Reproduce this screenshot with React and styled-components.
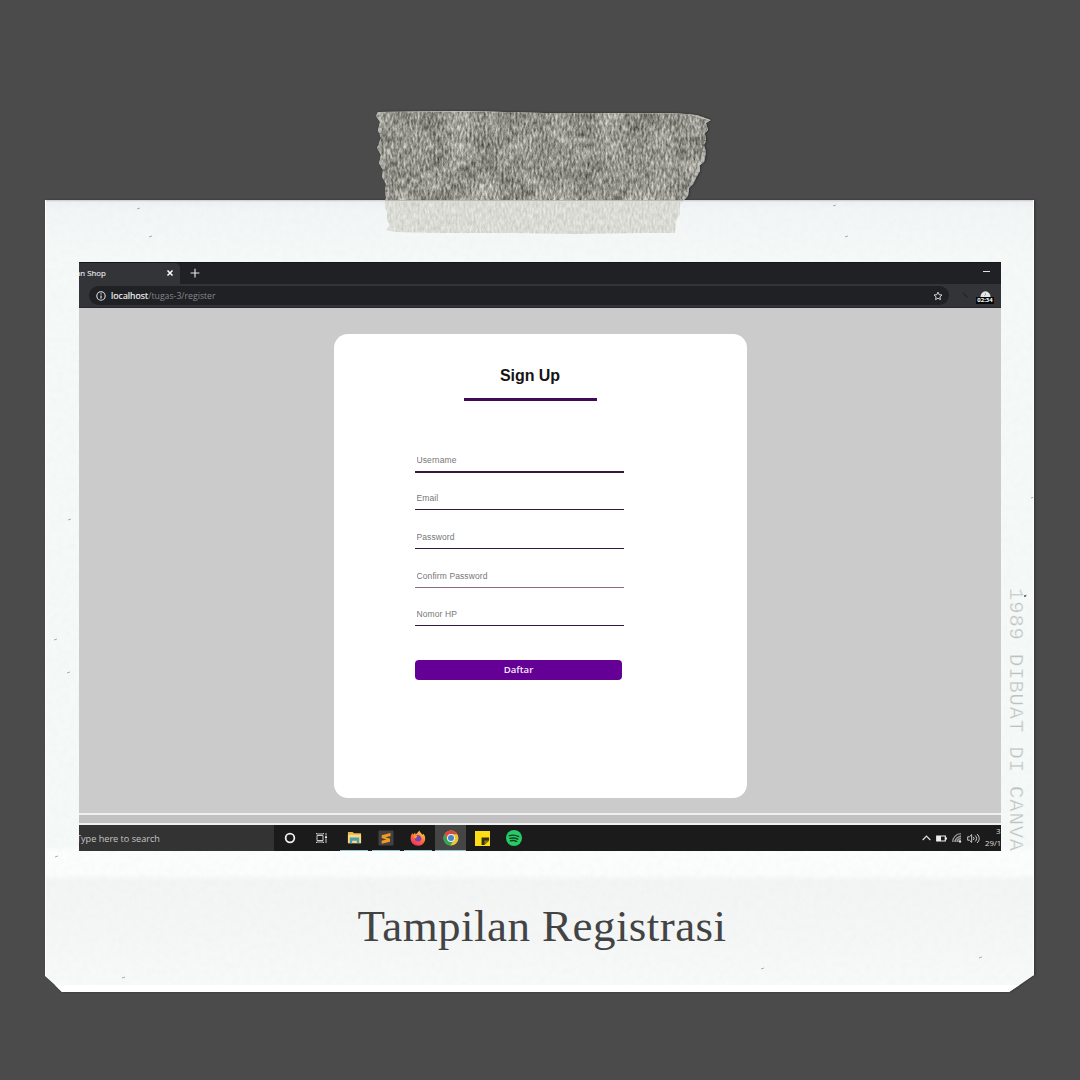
import React from "react";
import styled, { createGlobalStyle } from "styled-components";

const Global = createGlobalStyle`
  * { box-sizing: border-box; }
  body { margin: 0; background: #4b4b4b; }
`;

const Canvas = styled.main`
  width: 1080px;
  height: 1080px;
  padding: 200px 46px 0 45px;
  background: #4b4b4b;
  overflow: hidden;
  font-family: "Open Sans", sans-serif;
`;

const Photo = styled.section`
  position: relative;
  width: 989px;
  height: 792px;
  filter: drop-shadow(1px 0 1px rgba(30, 30, 30, 0.55));
`;

const Paper = styled.div`
  display: grid;
  grid-template-columns: 922px 33px;
  grid-template-rows: 589px 141px;
  height: 792px;
  padding: 62px 0 0 34px;
  background: linear-gradient(180deg, #c9c6d0 0, #eef0f2 2px, #f1f5f4 8px, transparent 9px),
    linear-gradient(180deg, transparent 785px, #ffffff 785px),
    linear-gradient(180deg, #f2f5f5 0, #f5f9f8 60px, #f5f9f8 645px, #fcfdfd 652px, #fbfcfc 674px, #f3f5f5 681px, #f4f7f6 740px, #f7faf9 785px);
  clip-path: polygon(0 0, 989px 0, 989px 775px, 976px 784px, 964px 792px, 17px 792px, 10px 785px, 0 776px);
`;

const Texture = styled.svg`
  position: absolute;
  inset: 0;
  pointer-events: none;
`;

const Screen = styled.div`
  position: relative;
  display: flex;
  flex-direction: column;
  height: 589px;
  overflow: hidden;
  background: #cbcbcb;
`;

const TabBar = styled.div`
  display: flex;
  height: 22px;
  background: #1f2125;
  border-top: 1px solid #14161a;
  color: #e6e6e6;
`;

const Tab = styled.div`
  display: flex;
  align-items: center;
  justify-content: space-between;
  width: 101px;
  padding: 0 6px 2px 0;
  background: #323438;
  border-radius: 0 5px 0 0;
  font-size: 7.8px;
  white-space: nowrap;
  -webkit-text-stroke: 0.15px #e6e6e6;
`;

const TabTitle = styled.span`
  margin-left: -3px;
`;

const TabTools = styled.div`
  display: flex;
  flex: 1;
  align-items: center;
  justify-content: space-between;
  padding: 0 11px 2px 10px;
`;

const Minimize = styled.span`
  width: 7px;
  height: 1px;
  margin-bottom: 3px;
  background: #e0e0e0;
`;

const AddressBar = styled.div`
  display: flex;
  align-items: center;
  height: 24px;
  padding: 0 7px 0 10px;
  background: #323438;
  border-bottom: 1px solid #25272a;
`;

const Omnibox = styled.div`
  display: flex;
  align-items: center;
  width: 860px;
  height: 19px;
  padding: 0 6px 0 7px;
  border-radius: 10px;
  background: #1f2125;
  color: #84878b;
  font-size: 8.7px;
  line-height: 18px;
`;

const Url = styled.span`
  flex: 1;
  margin-left: 5px;
`;

const Host = styled.span`
  color: #f0f0f0;
  letter-spacing: 0.1px;
  -webkit-text-stroke: 0.2px #f0f0f0;
`;

const Extensions = styled.div`
  display: flex;
  flex: 1;
  align-items: center;
  justify-content: flex-end;
  gap: 6px;
`;

const Timer = styled.div`
  display: flex;
  flex-direction: column;
  align-items: center;
  width: 18px;
  margin-top: 3px;
`;

const TimerLabel = styled.span`
  width: 18px;
  height: 7px;
  background: #08090b;
  color: #fff;
  font-size: 6px;
  font-weight: 700;
  line-height: 7px;
  text-align: center;
`;

const Page = styled.div`
  display: flex;
  flex-direction: column;
  align-items: center;
  height: 505px;
  padding-top: 26px;
  background: #cbcbcb;
`;

const Card = styled.form`
  display: flex;
  flex-direction: column;
  width: 413px;
  height: 464px;
  padding: 32px 0 0 81.5px;
  border-radius: 14px;
  background: #fff;
  font-family: "Liberation Sans", Arial, sans-serif;
`;

const Title = styled.h1`
  width: 133px;
  height: 35px;
  margin: 0 0 41.7px 48.5px;
  border-bottom: 3px solid #400a58;
  color: #151515;
  font-size: 16px;
  font-weight: 700;
  letter-spacing: -0.05px;
  line-height: 20px;
  text-align: center;
`;

const Field = styled.input`
  display: block;
  width: 209px;
  height: 30px;
  margin: 0 0 8.65px;
  padding: 5px 0 1px 1.5px;
  border: 0;
  background: linear-gradient(
    transparent 28px,
    ${(p) => (p.$soft ? "#8a6c88" : "#35183d")} 28px,
    ${(p) => (p.$soft ? "#8a6c88" : "#35183d")} 29.5px,
    transparent 29.5px
  );
  outline: 0;
  font-family: inherit;
  font-size: 8.5px;
  letter-spacing: 0.1px;
  &::placeholder { color: #777; opacity: 1; }
`;

const Submit = styled.button`
  width: 207px;
  height: 20px;
  margin-top: 24px;
  padding: 0;
  border: 0;
  border-radius: 4px;
  background: #640095;
  color: #f5e9fa;
  font: 600 9.6px/20px "Open Sans", sans-serif;
`;

const WindowEdge = styled.div`
  height: 12px;
  flex: none;
  border-top: 2px solid #efefef;
  border-bottom: 2px solid #f0f0f0;
  background: #c1c1c1;
`;

const Taskbar = styled.div`
  display: flex;
  height: 26px;
  flex: none;
  background: #1b1b1b;
`;

const Search = styled.div`
  width: 195px;
  background: #333;
  color: #c4c4c4;
  font-size: 9.15px;
  line-height: 27px;
  white-space: nowrap;
`;

const SearchText = styled.span`
  margin-left: -3px;
`;

const AppSlot = styled.div`
  display: flex;
  align-items: center;
  justify-content: center;
  width: ${(p) => (p.$active ? "31px" : p.$open ? "28px" : "32px")};
  margin-right: ${(p) => (p.$open && !p.$active ? "2px" : "0")};
  margin-left: ${(p) => (p.$active ? "1px" : p.$open ? "2px" : "0")};
  background: ${(p) => (p.$active ? "#454545" : "transparent")};
  border-bottom: ${(p) => (p.$open ? "1px solid #94c7d4" : "0")};
`;

const Tray = styled.div`
  display: flex;
  align-items: center;
  gap: 5px;
  margin-left: auto;
`;

const Clock = styled.div`
  width: 16px;
  height: 26px;
  color: #dedede;
  font-size: 7.8px;
  line-height: 12px;
  overflow: hidden;
  white-space: nowrap;
`;

const Hour = styled.div`
  height: 12px;
  padding-left: 11px;
`;

const SideNote = styled.div`
  width: 26px;
  height: 700px;
  margin-left: 1px;
  padding-top: 326px;
  color: #bdc1c0;
  font: 20.5px/26px "Liberation Mono", monospace;
  letter-spacing: 0.9px;
  white-space: nowrap;
  writing-mode: vertical-rl;
  -webkit-text-stroke: 0.4px #f5f9f8;
`;

const Caption = styled.h2`
  grid-column: 1;
  grid-row: 2;
  width: 926px;
  margin: 0;
  padding-top: 49px;
  color: #424242;
  font: 400 45px/52px "Liberation Serif", serif;
  letter-spacing: 0.45px;
  text-align: center;
`;

const Tape = styled.svg`
  position: absolute;
  left: 329px;
  top: -92px;
`;

const Icon = ({ s = 16, w = s, box = "0 0 16 16", children }) => (
  <svg width={w} height={s} viewBox={box} fill="none">{children}</svg>
);

const fields = ["Username", "Email", "Password", "Confirm Password", "Nomor HP"];

function Browser() {
  return (
    <>
      <TabBar>
        <Tab>
          <TabTitle>an Shop</TabTitle>
          <Icon s={8}><path d="M3 3l10 10M13 3L3 13" stroke="#fff" strokeWidth="3" /></Icon>
        </Tab>
        <TabTools>
          <Icon s={10}><path d="M8 1v14M1 8h14" stroke="#e8e8e8" strokeWidth="1.8" /></Icon>
          <Minimize />
        </TabTools>
      </TabBar>
      <AddressBar>
        <Omnibox>
          <Icon s={10}>
            <circle cx="8" cy="8" r="6.7" stroke="#e5e5e5" strokeWidth="1.7" />
            <path d="M8 7v5M8 3.7v2" stroke="#e5e5e5" strokeWidth="1.9" />
          </Icon>
          <Url><Host>localhost</Host>/tugas-3/register</Url>
          <Icon s={10}>
            <path d="M8 1.8l1.9 4.1 4.5.5-3.4 3 .9 4.4L8 11.5l-3.9 2.3.9-4.4-3.4-3 4.5-.5z" stroke="#d4d4d4" strokeWidth="1.6" />
          </Icon>
        </Omnibox>
        <Extensions>
          <Icon s={8}><path d="M2 2l9 9" stroke="#222428" strokeWidth="2.5" /></Icon>
          <Timer>
            <Icon w={11} s={7} box="0 0 11 7">
              <path d="M.5 7a5 5.8 0 0 1 10 0z" fill="#e6e6e6" />
              <path d="M5.5 3v2l-1.5 1" stroke="#aaa" />
            </Icon>
            <TimerLabel>02:34</TimerLabel>
          </Timer>
        </Extensions>
      </AddressBar>
    </>
  );
}

function Signup() {
  return (
    <Page>
      <Card>
        <Title>Sign Up</Title>
        {fields.map((name) => (
          <Field key={name} placeholder={name} aria-label={name} $soft={name === "Confirm Password"} />
        ))}
        <Submit type="button">Daftar</Submit>
      </Card>
    </Page>
  );
}

function Apps() {
  return (
    <>
      <AppSlot><Icon s={12}><circle cx="8" cy="8" r="5.8" stroke="#eee" strokeWidth="2.4" /></Icon></AppSlot>
      <AppSlot>
        <Icon w={12} s={12} box="0 0 12 12">
          <path d="M1 3.5h6v5H1zM.5 1v1h7V1M.5 11v-1h7v1M10 1v2.5M10 7v4" stroke="#ccc" />
          <path d="M9 4.2h2v2H9z" fill="#eee" />
        </Icon>
      </AppSlot>
      <AppSlot $open>
        <Icon s={15}>
          <path d="M1 2h5l1.5 1.5H15V14H1z" fill="#e9b84c" />
          <path d="M1 5h14v9H1z" fill="#fada7f" />
          <path d="M3 8h10v6h-2.5v-2.5h-5V14H3z" fill="#4d9cb8" />
        </Icon>
      </AppSlot>
      <AppSlot $open>
        <Icon s={16}>
          <rect x=".5" y=".5" width="15" height="15" rx="1" fill="#444240" />
          <path d="M12.5 3v3L7.5 7.3l4.5 1.5v3L3.7 13.8v-3L8.5 9.4 3.7 8V5.2z" fill="#f39a20" />
        </Icon>
      </AppSlot>
      <AppSlot $open>
        <Icon s={16}>
          <defs>
            <linearGradient id="fox" x1="12" y1="1" x2="4" y2="15" gradientUnits="userSpaceOnUse">
              <stop stopColor="#ffda45" /><stop offset=".5" stopColor="#ff7538" /><stop offset="1" stopColor="#ec2d68" />
            </linearGradient>
          </defs>
          <path d="M2.3 3.2l1.3 1.2L5 2.5l.5 1.7C7 3.6 8 2.1 9.3.4 10 3 12 3.1 12.4 5l.7-1.2C15 5.4 15.6 8 15 10.5 14 14 11.3 15.7 8 15.7c-4.2 0-7.2-3-7.4-7 0-2.1.5-3.8 1.7-5.5z" fill="url(#fox)" />
          <path d="M5 6.5c1.5-.4 1.9-1 3.2-1.4 2 .5 3.3 1.9 3.1 3.8-.3 1.8-1.5 2.7-3.3 2.7-2 0-3.2-1.3-3.3-3l2-.2z" fill="#7944b7" />
          <path d="M3.7 5.5l3.8.7-1.4 1.5-1.7.6z" fill="#ff9f35" />
        </Icon>
      </AppSlot>
      <AppSlot $active $open>
        <Icon s={16}>
          <circle cx="8" cy="8" r="7.5" fill="#edc52e" />
          <path d="M1.5 4.2A7.5 7.5 0 0 1 14.5 4.3H8a3.7 3.7 0 0 0-3.2 5.6z" fill="#db493c" />
          <path d="M1.5 4.2A7.5 7.5 0 0 0 7.2 15.5l4-5.7A3.7 3.7 0 0 1 4.8 9.9z" fill="#30a457" />
          <circle cx="8" cy="8" r="4" fill="#eee" /><circle cx="8" cy="8" r="3" fill="#4b83d1" />
        </Icon>
      </AppSlot>
      <AppSlot>
        <Icon s={15}><path d="M0 0h16v16H0z" fill="#ffdd16" /><path d="M7 7h8v3l-5 5H7z" fill="#34310f" /><path d="M10 15v-5h5z" fill="#8d7b0c" /></Icon>
      </AppSlot>
      <AppSlot>
        <Icon s={16}>
          <circle cx="8" cy="8" r="8" fill="#25cb65" />
          <path d="M3.3 5.7c3.3-1 6.5-.7 9.4.9M3.9 8.4c2.8-.8 5.5-.5 7.9.8M4.5 10.8c2.3-.6 4.4-.3 6.2.7" stroke="#123d23" strokeWidth="1.4" strokeLinecap="round" />
        </Icon>
      </AppSlot>
      <Tray>
        <Icon w={9} s={6} box="0 0 9 6"><path d="M.7 5l3.8-4 3.8 4" stroke="#ddd" strokeWidth="1.2" /></Icon>
        <Icon w={11} s={7} box="0 0 11 7"><path d="M.7 1h8.6v5H.7zM10.4 2.5v2" stroke="#eee" strokeWidth="1.2" /><path d="M1 1h4v5H1z" fill="#eee" /></Icon>
        <Icon w={10} s={10} box="0 0 10 10">
          <path d="M1 9L9 1v8z" fill="#555" />
          <path d="M.7 9A8 8 0 0 1 9 .8M3 9a6 6 0 0 1 6-5.8M5.2 9A4 4 0 0 1 9 5.5" stroke="#a5a5a5" strokeWidth="1.1" />
          <circle cx="8" cy="8.5" r="1.2" fill="#ddd" />
        </Icon>
        <Icon w={13} s={11} box="0 0 13 11">
          <path d="M.7 3.8h1.7l2.3-2.2v7.8L2.4 7.2H.7zM6.4 4a2.2 2.2 0 0 1 0 3M8.2 2.5c1.8 1.6 1.8 4.4 0 6M10 1c2.9 2.5 2.9 6.5 0 9" stroke="#ccc" />
        </Icon>
        <Clock><Hour>3</Hour><div>29/1</div></Clock>
      </Tray>
    </>
  );
}

function TornTape() {
  return (
    <Tape width="342" height="130" viewBox="0 0 342 130">
      <defs>
        <filter id="fibres" x="0" y="0" width="100%" height="100%" colorInterpolationFilters="sRGB">
          <feTurbulence type="fractalNoise" baseFrequency=".5 .17" numOctaves="3" seed="8" result="n" />
          <feColorMatrix in="n" values="1.35 0 0 0 -.1  1.35 0 0 0 -.1  1.35 0 0 0 -.13  0 0 0 0 1" />
        </filter>
        <filter id="clouds" x="0" y="0" width="100%" height="100%" colorInterpolationFilters="sRGB">
          <feTurbulence type="fractalNoise" baseFrequency=".04" numOctaves="3" seed="4" />
          <feColorMatrix values="1 0 0 0 .1  1 0 0 0 .1  1 0 0 0 .07  0 0 0 0 .3" />
        </filter>
        <clipPath id="torn">
          <path d="M4 4L90 3 170 5 240 5 300 5 323 7 337 12 332 15 334 22 331 25 332 33 330 37 332 44 330 54 326 57 326 63 323 68 319 76 315 80 314 88 310 92 306 97 306 106 302 113 301 125 265 125 200 126 140 125 60 125 22 124 12 122 16 117 13 112 13 105 10 96 12 90 11 82 12 76 8 69 9 62 5 55 7 47 3 40 7 30 4 22 6 14 2 8z" />
        </clipPath>
      </defs>
      <g clipPath="url(#torn)">
        <rect width="342" height="92" fill="#93938d" />
        <rect width="342" height="92" filter="url(#fibres)" opacity=".75" />
        <rect width="342" height="92" filter="url(#clouds)" />
        <rect y="92" width="342" height="38" fill="#e8e8e3" />
        <rect y="92" width="342" height="38" filter="url(#fibres)" opacity=".15" />
        <path d="M0 92.5h342" stroke="#b9b9b5" />
        <path d="M4 4l1 20-2 16 5 17-1 12 5 9-1 14M337 12l-5 25-3 18-11 22-8 15" stroke="#c7c8c5" strokeWidth="5" strokeDasharray="3 2 5 1" fill="none" opacity=".6" />
        <path d="M0 3.7l90-.4 150 1.5h70l25 7" stroke="#c4c5bc" fill="none" />
      </g>
    </Tape>
  );
}

const specks = [[92, 9], [104, 37], [23, 320], [9, 440], [22, 473], [10, 657], [788, 6], [800, 37], [979, 396], [716, 769], [77, 778], [934, 758], [986, 298]];

export default function App() {
  return (
    <Canvas>
      <Global />
      <Photo>
        <Paper>
          <Texture width="989" height="792">
            <defs>
              <filter id="paper" x="0" y="0" width="100%" height="100%" colorInterpolationFilters="sRGB">
                <feTurbulence type="fractalNoise" baseFrequency=".16" numOctaves="3" seed="2" />
                <feColorMatrix values="0 0 0 0 .7  0 0 0 0 .74  0 0 0 0 .72  .35 0 0 0 -.13" />
              </filter>
            </defs>
            <rect width="989" height="785" filter="url(#paper)" opacity=".25" />
            {specks.map(([x, y]) => <path key={x} d={`M${x} ${y}l3 -1`} stroke="#a9afab" strokeWidth="1" />)}
            <path d="M979 395h2v2h-2z" fill="#777" />
            <path d="M988.5 0v776M.5 0v776" stroke="#fff" />
          </Texture>
          <Screen>
            <Browser />
            <Signup />
            <WindowEdge />
            <Taskbar>
              <Search><SearchText>Type here to search</SearchText></Search>
              <Apps />
            </Taskbar>
          </Screen>
          <SideNote>1989 DIBUAT DI CANVA</SideNote>
          <Caption>Tampilan Registrasi</Caption>
        </Paper>
        <TornTape />
      </Photo>
    </Canvas>
  );
}
